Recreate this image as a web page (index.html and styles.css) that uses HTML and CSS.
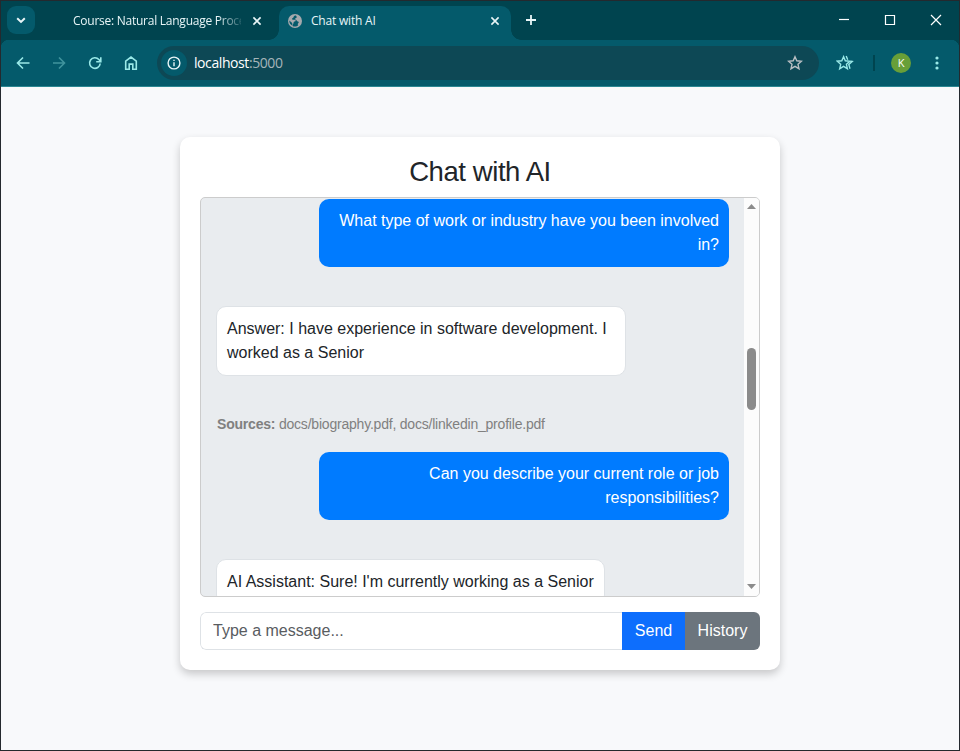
FILE: index.html
```html
<!DOCTYPE html>
<html lang="en">
<head>
<meta charset="utf-8">
<title>Chat with AI</title>
<link rel="stylesheet" href="styles.css">
</head>
<body>
<div class="window">
  <header class="tabstrip">
    <button class="tab-search" aria-label="Search tabs"><svg width="28" height="28" viewBox="0 0 28 28"><path d="M10.2 12.2l3.8 3.7 3.8-3.7"/></svg></button>
    <div class="tab tab-idle">
      <span class="tab-title">Course: Natural Language Proce</span>
      <svg class="close" width="10" height="10" viewBox="0 0 10 10"><path d="M1.4 1.4l7.2 7.2M8.6 1.4L1.4 8.6"/></svg>
    </div>
    <div class="tab tab-active">
      <svg class="globe" width="14" height="14" viewBox="0 0 14 14"><circle cx="7" cy="7" r="7"/><path d="M7.800 1.500C6.600 1.500 5.700 2.100 5.500 3.300c-.1.900-1.600.7-1.500 1.700.1.900 1.500.6 2.800.7 1.300 0 1.100 1.600-.1 1.900-1.300.3-1 1.300-1.300 2-.4.800-.8 1.300-.5 2.600.7.200 1.400.3 2.100.3 1.200 0 2.400-.5 3.300-1.300-.6-.6-.8-1.300-.1-1.900.7-.5.700-1.600-.2-1.900-.7-.2-1.200-.3-1.300-1-.1-1-1.300-.6-1.700-1.200-.5-.8.9-1 1.500-1.500.5-.5.100-1.500-.7-2.200zM1.300 6.500l2.600 2.300c.7.700.1 1.500.6 2.900C2.500 10.800 1.200 8.900 1.300 6.500z"/></svg>
      <span class="tab-title">Chat with AI</span>
      <svg class="close" width="10" height="10" viewBox="0 0 10 10"><path d="M1.4 1.4l7.2 7.2M8.6 1.4L1.4 8.6"/></svg>
    </div>
    <svg class="new-tab" width="12" height="12" viewBox="0 0 12 12"><path d="M6 1v10M1 6h10"/></svg>
    <div class="window-controls">
      <svg width="46" height="38" viewBox="0 0 46 38"><path d="M18 18.500h10"/></svg>
      <svg width="46" height="38" viewBox="0 0 46 38"><path d="M18.500 14.500h9v9h-9z"/></svg>
      <svg width="46" height="38" viewBox="0 0 46 38"><path d="M18 14l10 10M28 14L18 24"/></svg>
    </div>
  </header>
  <nav class="toolbar">
    <svg class="tool" width="36" height="36" viewBox="0 0 36 36"><path d="M24.500 18h-12M18 12.500L12.500 18l5.500 5.500"/></svg>
    <svg class="tool dim" width="36" height="36" viewBox="0 0 36 36"><path d="M12 18h11.500M18 12.500l5.500 5.500-5.500 5.500"/></svg>
    <svg class="tool" width="36" height="36" viewBox="0 0 36 36"><path d="M23.200 18.500a5.300 5.300 0 1 1-1.300-4l1.700 2M23.800 12.200v4.500h-4.600"/></svg>
    <svg class="tool" width="36" height="36" viewBox="0 0 36 36"><path d="M12.700 24.200v-8L18 12.100l5.300 4.100v8h-3.500v-5.100h-3.600v5.100z"/></svg>
    <div class="address">
      <span class="site-info"><svg width="14" height="14" viewBox="0 0 14 14"><circle cx="7" cy="7" r="5.900"/><path d="M7 6.200v4M7 3.700v1.300"/></svg></span>
      <span class="url">localhost<span class="port">:5000</span></span>
      <svg class="bookmark" width="16" height="16" viewBox="0 0 16 16"><path d="M8 1.700l1.800 4.100 4.700.4-3.500 3.100 1 4.400L8 11.300l-4 2.400 1-4.400-3.500-3.100 4.700-.4z"/></svg>
    </div>
    <svg class="favorites" width="18" height="16" viewBox="0 0 18 16"><path d="M7.600 1.700l1.700 4.100 4.600.4-3.500 3.100 1 4.400-3.800-2.400-3.900 2.400 1-4.400-3.500-3.100 4.600-.4zM10.200 1.100l1.500 3.700M14.700 6.200l1.500.2-3.400 3 1.200 4.300"/></svg>
    <span class="divider"></span>
    <span class="avatar">K</span>
    <svg class="menu" width="4" height="16" viewBox="0 0 4 16"><circle cx="2" cy="3" r="1.600"/><circle cx="2" cy="8" r="1.600"/><circle cx="2" cy="13" r="1.600"/></svg>
  </nav>
  <main class="page">
    <section class="card">
      <h1>Chat with AI</h1>
      <div class="chat">
        <div class="messages">
          <div class="message user">What type of work or industry have you been involved in?</div>
          <div class="message bot">Answer: I have experience in software development. I worked as a Senior</div>
          <div class="sources"><b>Sources:</b> docs/biography.pdf, docs/linkedin_profile.pdf</div>
          <div class="message user">Can you describe your current role or job responsibilities?</div>
          <div class="message bot">AI Assistant: Sure! I'm currently working as a Senior</div>
        </div>
        <div class="scrollbar">
          <svg width="9" height="5" viewBox="0 0 9 5"><path d="M0 5l4.500-5L9 5z"/></svg>
          <span class="thumb"></span>
          <svg class="down" width="9" height="5" viewBox="0 0 9 5"><path d="M0 0l4.500 5L9 0z"/></svg>
        </div>
      </div>
      <form class="composer">
        <input type="text" placeholder="Type a message...">
        <button type="button" class="send">Send</button>
        <button type="button" class="history">History</button>
      </form>
    </section>
  </main>
</div>
</body>
</html>
```
FILE: styles.css
```css
* { box-sizing: border-box; }
body { margin: 0; font: 16px/24px "Liberation Sans", Arial, sans-serif; color: #212529; }
button, input { font: inherit; margin: 0; border: 0; }
svg { display: block; flex: none; fill: none; }
.window { display: flex; flex-direction: column; height: 751px; border: 1px solid #24292e; background: #045a6b; overflow: hidden; }

.tabstrip { display: flex; height: 39px; flex: none; background: #00444f; font: 12px/16px "Open Sans", sans-serif; color: #e8f5f7; }
.tab-search { width: 28px; height: 28px; margin: 5px 0 0 6px; padding: 0; border-radius: 9px; background: #045a6b; }
.tab-search path { stroke: #e8f5f7; stroke-width: 2; }
.tab { display: flex; align-items: center; height: 34px; margin-top: 5px; padding-bottom: 5px; }
.tab-idle { width: 244px; padding-left: 38px; }
.tab-idle .tab-title { width: 168px; letter-spacing: -.25px; -webkit-mask-image: linear-gradient(90deg, #000 145px, transparent 172px); mask-image: linear-gradient(90deg, #000 145px, transparent 172px); }
.tab-title { white-space: nowrap; }
.close { margin-left: 11px; }
.close path { stroke: #e8f5f7; stroke-width: 1.6; }
.tab-active { position: relative; width: 232px; padding-left: 9px; border-radius: 10px 10px 0 0; background: #045a6b; }
.tab-active::before, .tab-active::after { content: ""; position: absolute; bottom: 0; width: 10px; height: 10px; }
.tab-active::before { right: 100%; background: radial-gradient(circle at 0 0, transparent 9.5px, #045a6b 10px); }
.tab-active::after { left: 100%; background: radial-gradient(circle at 100% 0, transparent 9.5px, #045a6b 10px); }
.tab-active .tab-title { margin-left: 9px; letter-spacing: -.2px; }
.tab-active .close { margin-left: auto; margin-right: 11px; }
.globe circle { fill: #a5a9ad; }
.globe path { fill: #045a6b; }
.new-tab { margin: 13px 0 0 14px; }
.new-tab path { stroke: #e8f5f7; stroke-width: 1.8; }
.window-controls { display: flex; margin-left: auto; }
.window-controls path { stroke: #fff; stroke-width: 1.2; }

.toolbar { display: flex; align-items: center; height: 47px; flex: none; padding: 0 20px 0 4px; border-bottom: 1px solid #2b8792; background: radial-gradient(circle at 8px 8px, #045a6b 8px, #00444f 8.5px) 0 0 / 8px 8px no-repeat, radial-gradient(circle at 0 8px, #045a6b 8px, #00444f 8.5px) 100% 0 / 8px 8px no-repeat, #045a6b; }
.tool path { stroke: #9ae9e8; stroke-width: 1.6; }
.dim { opacity: .4; }
.address { display: flex; align-items: center; width: 662px; height: 34px; margin-left: 8px; padding: 0 16px 0 4px; border-radius: 17px; background: #0d4855; }
.site-info { display: grid; place-items: center; width: 26px; height: 26px; border-radius: 50%; background: #045a6b; }
.site-info svg { stroke: #e8f5f7; stroke-width: 1.4; }
.url { margin-left: 7px; font: 14px/20px "Open Sans", sans-serif; letter-spacing: -.42px; color: #fff; }
.port { color: #a6b5b9; }
.bookmark { margin-left: auto; }
.bookmark path { stroke: #b9bfc3; stroke-width: 1.4; }
.favorites { margin-left: 17px; }
.favorites path { stroke: #9ae9e8; stroke-width: 1.4; }
.divider { width: 2px; height: 16px; margin-left: 19px; background: #00444f; }
.avatar { width: 20px; height: 20px; margin-left: 16px; border-radius: 50%; background: #689f38; color: #fff; font: 11px/20px "Open Sans", sans-serif; text-align: center; }
.menu { margin-left: auto; }
.menu circle { fill: #9ae9e8; }

.page { flex: 1; padding-top: 50px; background: #f8f9fb; }
.card { width: 600px; height: 533px; margin: 0 auto; padding: 20px; border-radius: 10px; background: #fff; box-shadow: 0 4px 8px rgba(0, 0, 0, .2); }
h1 { margin: 0; height: 40px; font-size: 27.5px; letter-spacing: -.42px; font-weight: 400; line-height: 29px; text-align: center; }
.chat { display: flex; height: 400px; border: 1px solid #ccc; border-radius: 5px; background: #e9ecef; overflow: hidden; }
.messages { display: flex; flex: 1; flex-direction: column; padding: 1px 15px 0; overflow: hidden; }
.message { flex: none; max-width: 410px; padding: 10px; border-radius: 10px; }
.user { align-self: flex-end; width: 410px; background: #007bff; color: #fff; text-align: right; }
.bot { align-self: flex-start; margin-top: 39px; border: 1px solid #dee2e6; background: #fff; }
.sources { margin: 38px 0 17px; padding-left: 1px; font-size: 14px; letter-spacing: -.21px; line-height: 21px; color: gray; }
.scrollbar { display: flex; flex-direction: column; align-items: center; width: 15px; padding: 6px 0 7px; background: #fcfcfc; }
.scrollbar path { fill: #8b8b8b; }
.thumb { width: 9px; height: 62px; margin-top: 139px; border-radius: 5px; background: #8b8b8b; }
.down { margin-top: auto; }
.composer { display: flex; height: 38px; margin-top: 15px; border-radius: 6px; overflow: hidden; }
.composer input { flex: 1; min-width: 0; padding: 6px 12px; border: 1px solid #dee2e6; border-right: 0; border-radius: 6px 0 0 6px; }
.composer input::placeholder { color: #595c5f; opacity: 1; }
.composer button { padding: 0; color: #fff; }
.send { width: 63px; background: #0d6efd; }
.history { width: 75px; background: #6c757d; }
```
